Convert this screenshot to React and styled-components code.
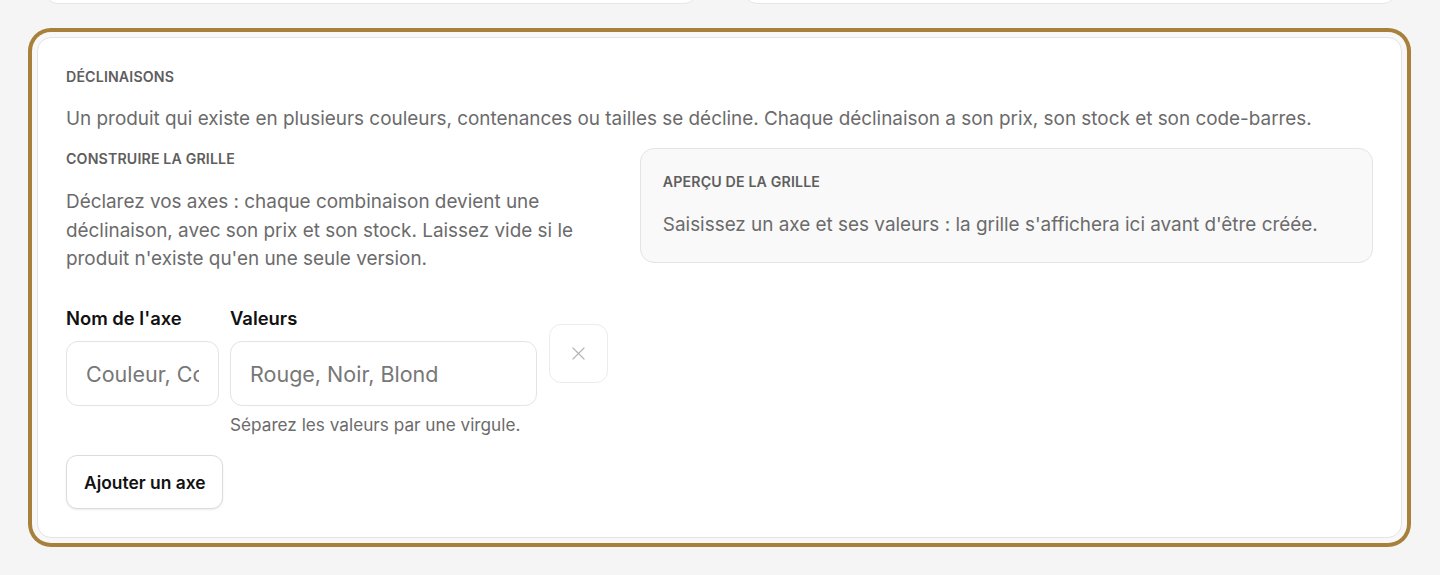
import React from 'react'
import styled, { createGlobalStyle } from 'styled-components'

const GlobalStyle = createGlobalStyle`
  body {
    margin: 0;
    background: #f5f5f5;
    font-family: Inter, "Noto Sans", sans-serif;
    color: #111;
  }
  * { box-sizing: border-box; }
`

const Page = styled.div`
  padding: 0 38px 40px 37px;
`

const TopRow = styled.div`
  display: grid;
  grid-template-columns: 1fr 1fr;
  gap: 45px;
  padding: 0 5px 0 7px;
  margin-top: -40px;
  margin-bottom: 33px;
`

const TopCard = styled.div`
  height: 44px;
  background: #fff;
  border: 1px solid #e6e6e6;
  border-radius: 14px;
`

const Card = styled.section`
  background: #fff;
  border: 1px solid #e4e4e4;
  border-radius: 14px;
  padding: 30px 28px 28px;
  box-shadow: 0 0 0 5px #f8f8f8, 0 0 0 9px #a7803c;
`

const Eyebrow = styled.h3`
  margin: 0;
  font-size: 14.2px;
  font-weight: 600;
  letter-spacing: 0.01em;
  text-transform: uppercase;
  color: #5e5e5e;
  line-height: 17px;
`

const Lead = styled.p`
  margin: 19px 0 0;
  font-size: 18.9px;
  line-height: 30px;
  color: #6b6b6b;
`

const Columns = styled.div`
  display: grid;
  grid-template-columns: minmax(0, 3fr) minmax(0, 4fr);
  gap: 24px;
  margin-top: 14px;
  align-items: start;
`

const Column = styled.div`
  padding-top: 2px;
`

const Help = styled.p`
  margin: 21px 0 0;
  max-width: 530px;
  font-size: 18.9px;
  line-height: 28.7px;
  color: #6b6b6b;
`

const AxisRow = styled.div`
  display: flex;
  gap: 11px;
  margin-top: 33px;
  align-items: flex-start;
`

const Field = styled.div`
  display: flex;
  flex-direction: column;
  flex: 0 0 ${(p) => p.$w}px;
`

const Label = styled.label`
  font-size: 18.4px;
  font-weight: 600;
  color: #111;
  line-height: 23px;
  margin-bottom: 11px;
`

const Input = styled.input`
  height: 65px;
  width: 100%;
  border: 1px solid #e3e3e3;
  border-radius: 12px;
  padding: 0 19px;
  font-family: inherit;
  font-size: 21.5px;
  color: #111;
  background: #fff;
  outline: none;
  &::placeholder { color: #777; }
`

const Hint = styled.span`
  margin-top: 8px;
  font-size: 17.2px;
  color: #6b6b6b;
  line-height: 22px;
  white-space: nowrap;
`

const IconButton = styled.button`
  flex: 0 0 59px;
  height: 59px;
  margin-top: 17px;
  margin-left: 1px;
  border: 1px solid #ececec;
  border-radius: 12px;
  background: #fff;
  display: flex;
  align-items: center;
  justify-content: center;
  color: #b5b5b5;
  padding: 0;
`

const AddButton = styled.button`
  margin-top: 19px;
  height: 54px;
  padding: 0 17px;
  border: 1px solid #dcdcdc;
  border-radius: 11px;
  background: #fff;
  font-family: inherit;
  font-size: 17.4px;
  font-weight: 600;
  color: #111;
  box-shadow: 0 1px 2px rgba(0, 0, 0, 0.08);
`

const Preview = styled.aside`
  background: #f9f9f9;
  border: 1px solid #e4e4e4;
  border-radius: 14px;
  padding: 24px 22px 23px;
`

const PreviewText = styled.p`
  margin: 21px 0 0;
  font-size: 18.9px;
  line-height: 28px;
  color: #6b6b6b;
`

export default function App() {
  return (
    <Page>
      <GlobalStyle />
      <TopRow>
        <TopCard />
        <TopCard />
      </TopRow>
      <Card>
        <Eyebrow>Déclinaisons</Eyebrow>
        <Lead>
          Un produit qui existe en plusieurs couleurs, contenances ou tailles se décline. Chaque déclinaison a son prix, son stock et son code-barres.
        </Lead>
        <Columns>
          <Column>
            <Eyebrow>Construire la grille</Eyebrow>
            <Help>
              Déclarez vos axes : chaque combinaison devient une déclinaison, avec son prix et son stock. Laissez vide si le produit n'existe qu'en une seule version.
            </Help>
            <AxisRow>
              <Field $w={153}>
                <Label>Nom de l'axe</Label>
                <Input placeholder="Couleur, Contenance" />
              </Field>
              <Field $w={307}>
                <Label>Valeurs</Label>
                <Input placeholder="Rouge, Noir, Blond" />
                <Hint>Séparez les valeurs par une virgule.</Hint>
              </Field>
              <IconButton aria-label="Supprimer l'axe">
                <svg width="19" height="19" viewBox="0 0 24 24" fill="none" stroke="currentColor" strokeWidth="1.5" strokeLinecap="round">
                  <path d="M5 5l14 14M19 5L5 19" />
                </svg>
              </IconButton>
            </AxisRow>
            <AddButton>Ajouter un axe</AddButton>
          </Column>
          <Preview>
            <Eyebrow>Aperçu de la grille</Eyebrow>
            <PreviewText>
              Saisissez un axe et ses valeurs : la grille s'affichera ici avant d'être créée.
            </PreviewText>
          </Preview>
        </Columns>
      </Card>
    </Page>
  )
}
